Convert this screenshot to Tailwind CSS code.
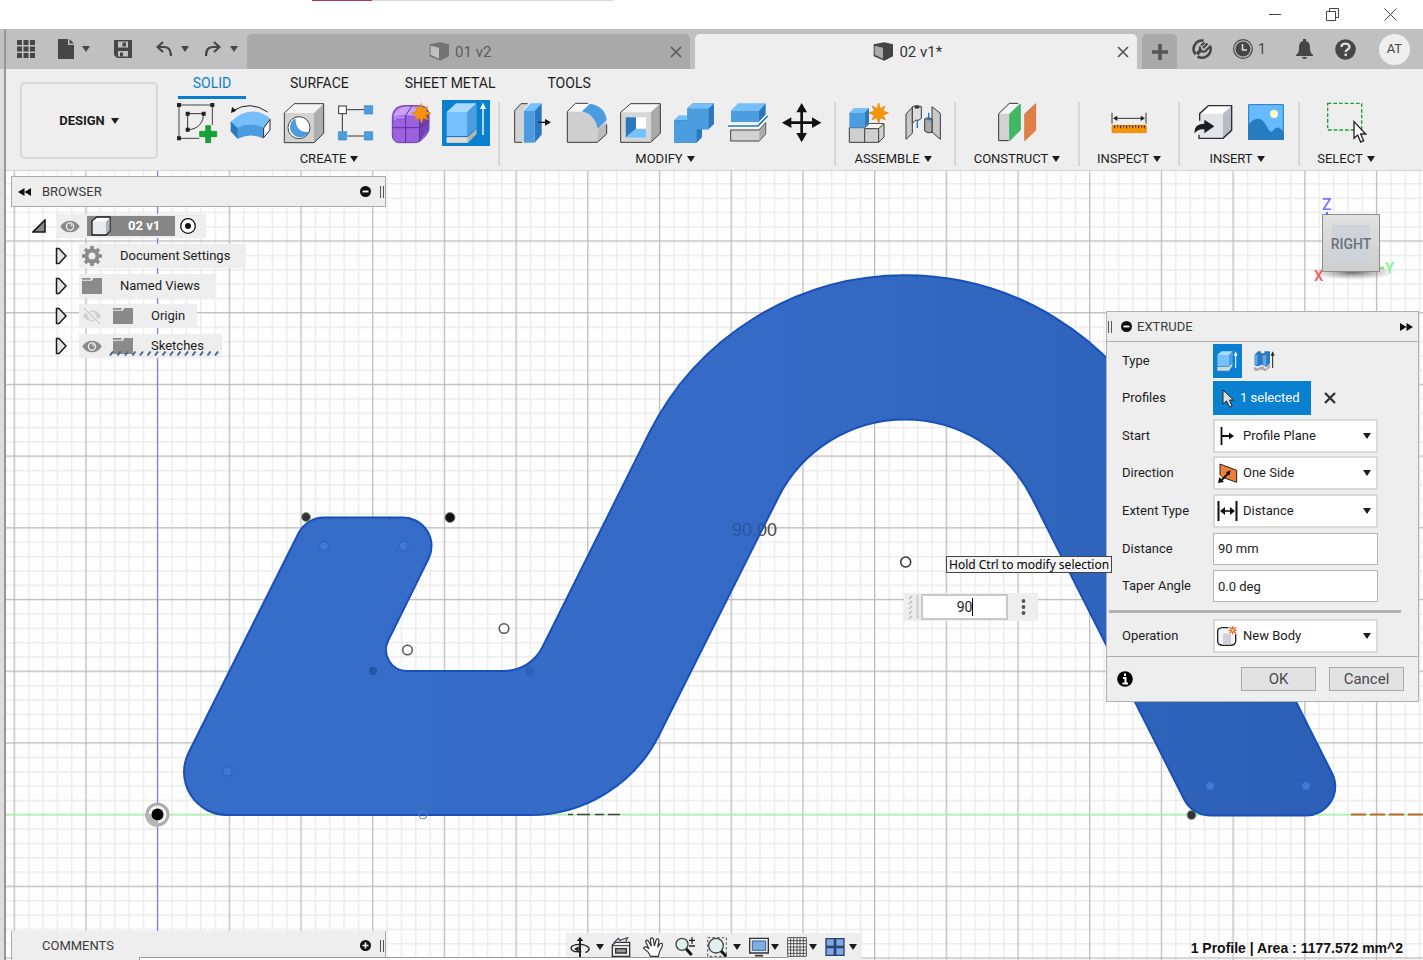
<!DOCTYPE html>
<html lang="en">
<head>
<meta charset="utf-8">
<title>02 v1*</title>
<script src="https://cdn.jsdelivr.net/npm/@tailwindcss/browser@4"></script>
</head>
<body class="flex h-screen flex-col overflow-hidden bg-white font-['Roboto',sans-serif] text-[13px] leading-4 text-[#1c1c1c]">

<!-- shared glyphs -->
<svg class="hidden" aria-hidden="true">
  <symbol id="down" viewBox="0 0 8 6"><path d="M0 0H8L4 6Z" fill="currentColor"/></symbol>
  <symbol id="cross" viewBox="0 0 12 12"><path d="M1 1L11 11M11 1L1 11" stroke="currentColor" stroke-width="1.7" fill="none"/></symbol>
  <symbol id="eye" viewBox="0 0 60 40"><path d="M0 20C14-4 46-4 60 20C46 44 14 44 0 20Z" fill="currentColor"/><circle cx="30" cy="20" r="13" fill="#eee"/><circle cx="30" cy="20" r="9" fill="currentColor"/><circle cx="34" cy="16" r="3" fill="#eee"/></symbol>
  <symbol id="folder" viewBox="0 0 60 48"><path d="M0 0H26V5H0ZM0 8H30L34 0H60V48H0Z" fill="currentColor"/></symbol>
  <symbol id="expand" viewBox="0 0 12 18"><path d="M1.500 1.500H4L11 9L4 16.500H1.500Z" fill="#e4e4e4" stroke="#1a1a1a" stroke-width="1.500"/></symbol>
  <symbol id="star" viewBox="-30 -30 60 60"><path d="M0-30L5-13L19-21L13-6L30 0L13 6L20 20L6 14L0 30L-6 14L-20 20L-13 6L-30 0L-13-6L-19-21L-5-13Z" fill="#f7950a" stroke="#e07f00" stroke-width="2"/></symbol>
  <symbol id="cube" viewBox="0 0 60 56"><path d="M2 6L34 0L60 6V42L34 56L2 42Z" fill="currentColor"/><path d="M5 11L30 17V50L5 38Z" fill="#fff" fill-opacity=".55"/></symbol>
</svg>

<header class="flex h-[29px] shrink-0 items-start">
  <div class="ml-[312px] flex h-px w-[301px] bg-[#d6d6d6]"><div class="w-[60px] bg-[#b03468]"></div></div>
  <div class="ml-auto mr-[26px] flex h-7 items-center gap-[45px] text-[#444]">
    <button aria-label="Minimize"><svg class="block h-[13px] w-3" viewBox="0 0 12 13"><path d="M0 6.500H12" stroke="currentColor"/></svg></button>
    <button aria-label="Restore"><svg class="block h-[13px] w-[13px]" viewBox="0 0 13 13" fill="none" stroke="currentColor"><path d="M.5 3.500H9.500V12.500H.5ZM3.500 3V.5H12.500V9.500H10"/></svg></button>
    <button aria-label="Close window"><svg class="block h-[13px] w-[13px]" viewBox="0 0 13 13"><path d="M.5.5L12.500 12.500M12.500.5L.5 12.500" stroke="currentColor"/></svg></button>
  </div>
</header>

<div class="flex min-h-0 flex-1">
<div class="w-[4px] shrink-0 bg-[#dedede]"><div class="h-10 bg-[#c0c0c0]"></div></div>
<div class="w-[2px] shrink-0 bg-[#969696]"></div>
<div class="flex min-w-0 flex-1 flex-col">

<!-- application bar -->
<nav class="flex h-10 shrink-0 bg-[#c0c0c0] text-[#464646]">
  <div class="flex w-[241px] shrink-0 items-center pl-[11px]">
    <button aria-label="Data panel"><svg class="block h-[18px] w-[18px]" viewBox="0 0 18 18" fill="currentColor"><path d="M0 0H5V5H0ZM6.500 0H11.500V5H6.500ZM13 0H18V5H13ZM0 6.500H5V11.500H0ZM6.500 6.500H11.500V11.500H6.500ZM13 6.500H18V11.500H13ZM0 13H5V18H0ZM6.500 13H11.500V18H6.500ZM13 13H18V18H13Z"/></svg></button>
    <button aria-label="File" class="ml-[23px] flex items-center gap-2"><svg class="h-5 w-4" viewBox="0 0 16 20" fill="currentColor"><path d="M0 0H10V6H16V20H0ZM11.500 0L16 4.500H11.500Z"/></svg><svg class="h-[6px] w-2"><use href="#down"/></svg></button>
    <button aria-label="Save" class="ml-6"><svg class="block h-[18px] w-[18px]" viewBox="0 0 18 18"><path d="M0 0H18V18H3L0 15Z" fill="currentColor"/><path d="M4 1.500H14V7.500H4ZM4 11H14V16.500H4Z" fill="#c0c0c0"/><path d="M8.500 2.500H12V6.500H8.500ZM6 12.500H9V16.500H6Z" fill="currentColor"/></svg></button>
    <button aria-label="Undo" class="ml-6 flex items-center gap-[9px]"><svg class="h-4 w-4" viewBox="0 0 16 16" fill="none" stroke="currentColor" stroke-width="2.200"><path d="M7 1L1.500 6L7 11M2 6H8C13 6 15 9 15 15"/></svg><svg class="h-[6px] w-2"><use href="#down"/></svg></button>
    <button aria-label="Redo" class="ml-4 flex items-center gap-[9px]"><svg class="h-4 w-4" viewBox="0 0 16 16" fill="none" stroke="currentColor" stroke-width="2.200"><path d="M9 1L14.500 6L9 11M14 6H8C3 6 1 9 1 15"/></svg><svg class="h-[6px] w-2"><use href="#down"/></svg></button>
  </div>
  <div class="flex min-w-0 flex-1 gap-[5px] pt-[5px] text-[15px]">
    <div class="flex flex-1 items-center rounded-t-[5px] bg-[#a9a9a9] pr-2 text-[#5b5b5b]">
      <a href="#" class="flex flex-1 items-center justify-center gap-[6px] pl-1"><svg class="h-[19px] w-5 text-[#737373]"><use href="#cube"/></svg>01 v2</a>
      <button aria-label="Close 01 v2"><svg class="block h-3 w-3"><use href="#cross"/></svg></button>
    </div>
    <div class="flex flex-1 items-center rounded-t-[5px] bg-[#eee] pr-2 text-[#333]">
      <a href="#" class="flex flex-1 items-center justify-center gap-[6px] pl-1"><svg class="h-[19px] w-5 text-[#444]"><use href="#cube"/></svg>02 v1*</a>
      <button aria-label="Close 02 v1" class="text-[#555]"><svg class="block h-3 w-3"><use href="#cross"/></svg></button>
    </div>
    <button aria-label="New design" class="flex w-[35px] items-center justify-center rounded-t-[5px] bg-[#a9a9a9] text-[#555]"><svg class="h-4 w-4" viewBox="0 0 16 16"><path d="M8 0V16M0 8H16" stroke="currentColor" stroke-width="3.500"/></svg></button>
  </div>
  <div class="flex w-[246px] shrink-0 items-center pl-[15px] text-[14px]">
    <button aria-label="Extensions"><svg class="block h-5 w-5" viewBox="0 0 20 20" fill="none" stroke="currentColor" stroke-width="2.600"><path d="M11.500 1.700A8.500 8.500 0 0 0 3.500 15.400M5.500 17.300A8.500 8.500 0 0 0 17.800 6.500" /><path d="M5 15L9 11" stroke-width="3.500"/><path d="M8 7.500A4 4 0 0 0 13 12.500L17.500 8M9 6.500L12.500 3.500M11 9L15.500 4.500" stroke-width="2.200"/></svg></button>
    <button class="ml-[21px] flex items-center gap-[5px]" aria-label="Job status, 1"><svg class="h-5 w-5" viewBox="0 0 20 20"><circle cx="10" cy="10" r="9.300" fill="none" stroke="currentColor" stroke-width="1.200"/><circle cx="10" cy="10" r="7.500" fill="currentColor"/><path d="M9.500 5V11H14" fill="none" stroke="#ddd" stroke-width="1.500"/></svg>1</button>
    <button aria-label="Notifications" class="ml-[30px]"><svg class="block h-5 w-[17px]" viewBox="0 0 17 20" fill="currentColor"><path d="M7 0H10V2C13.500 3 14 6 14 9C14 13 15 14 17 16V17H0V16C2 14 3 13 3 9C3 6 3.500 3 7 2ZM6 18H11C11 20.500 6 20.500 6 18Z"/></svg></button>
    <button aria-label="Help" class="ml-[22px]"><svg class="block h-[21px] w-[21px]" viewBox="0 0 21 21"><circle cx="10.500" cy="10.500" r="10.300" fill="currentColor"/><path d="M6.500 8C6.500 3.500 14.500 3.500 14.500 8C14.500 10.500 10.700 10.500 10.700 13M10.700 14.500V17" fill="none" stroke="#ddd" stroke-width="2.400"/></svg></button>
    <button aria-label="Account" class="ml-[23px] flex h-[31px] w-[31px] items-center justify-center rounded-full bg-[#eee] text-[13px]">AT</button>
  </div>
</nav>

<!-- toolbar -->
<section class="flex h-[102px] shrink-0 border-b border-[#d4d4d4] bg-[#eee]">
  <button class="ml-[14px] mt-[13px] flex h-[77px] w-[138px] shrink-0 items-center justify-center gap-[6px] rounded-[5px] border-2 border-[#d8d8d8] font-bold">DESIGN <svg class="h-[6px] w-2"><use href="#down"/></svg></button>
  <div class="ml-[6px] flex flex-col">
    <div class="flex h-[31px] text-[14px]">
      <a href="#" class="ml-[14px] flex h-[30px] w-[68px] justify-center border-b-[3px] border-[#0a7fd0] pt-[6px] text-[#0a80cf]">SOLID</a>
      <a href="#" class="ml-11 pt-[6px]">SURFACE</a>
      <a href="#" class="ml-[56px] pt-[6px]">SHEET METAL</a>
      <a href="#" class="ml-[52px] pt-[6px]">TOOLS</a>
    </div>
    <div class="flex">
      <div class="flex w-[334px] flex-col items-center gap-[5px]">
        <div class="flex gap-[6px]">
          <button aria-label="Create sketch"><svg class="block h-[46px] w-12" viewBox="516 300 144 138"><path d="M637 375V315H537V415H598" fill="none" stroke="#444" stroke-width="3"/><path d="M563 389V341H610C612 365 595 389 563 389" fill="none" stroke="#333" stroke-width="3"/><path d="M531 309h12v12h-12zM631 309h12v12h-12zM531 409h12v12h-12zM557 335h12v12h-12zM605 335h12v12h-12zM557 383h12v12h-12z" fill="#222"/><path d="M617 377H632V394H650V410H632V428H617V410H599V394H617Z" fill="#17a338" stroke="#0d8a2a" stroke-width="2"/></svg></button>
          <button aria-label="Revolve"><svg class="block h-[46px] w-12" viewBox="678 300 144 138"><path d="M692 366Q748 310 810 354L790 385Q750 366 712 386Z" fill="#76bffb"/><path d="M712 384Q750 364 790 383V416Q750 396 712 417Z" fill="#4b9de0"/><path d="M692 364L713 384V417L692 394Z" fill="#2b78bd"/><path d="M791 384L810 358V390L791 413Z" fill="#fff" stroke="#222" stroke-width="3"/><path d="M700 332Q750 300 803 336" fill="none" stroke="#222" stroke-width="3"/><path d="M693 339L696 321L709 332Z" fill="#111"/></svg></button>
          <button aria-label="Hole"><svg class="block h-[46px] w-12" viewBox="840 300 144 138"><path d="M853 339L883 311H971L942 339Z" fill="#f4f4f4"/><path d="M942 339L971 311V400L942 428Z" fill="#aeaeae"/><path d="M853 339H942V428H853Z" fill="#d2d2d2"/><path d="M853 339L883 311H971V400L942 428H853Z" fill="none" stroke="#3a3a3a" stroke-width="3"/><circle cx="897" cy="383" r="33" fill="#fff" stroke="#444" stroke-width="3"/><path d="M885 357A29 29 0 1 0 925 397C900 400 885 382 885 357Z" fill="#4b9de0" stroke="#2b78bd" stroke-width="2"/></svg></button>
          <button aria-label="Rectangular pattern"><svg class="block h-[46px] w-12" viewBox="1002 300 144 138"><path d="M1027 341V395M1042 329H1092M1042 408H1092" stroke="#333" stroke-width="3"/><rect x="1016" y="318" width="23" height="23" fill="#fff" stroke="#333" stroke-width="3"/><path d="M1093 317h25v25h-25zM1015 395h25v25h-25zM1093 395h25v25h-25z" fill="#4b9de0" stroke="#3787cc" stroke-width="2"/></svg></button>
          <button aria-label="Create form"><svg class="block h-[46px] w-12" viewBox="1164 300 144 138"><path d="M1177 350Q1180 318 1212 317H1262Q1288 320 1287 350V388Q1284 405 1258 425Q1250 429 1230 428H1195Q1177 425 1177 405Z" fill="#9a62df" stroke="#6d3aae" stroke-width="3"/><path d="M1180 350Q1185 325 1213 320H1260Q1275 322 1280 334L1256 350Q1220 342 1180 350Z" fill="#c9a0fa"/><path d="M1259 352L1286 332V388L1259 422Z" fill="#7542b5"/><path d="M1217 346V426M1178 383H1259L1286 362M1217 346L1236 318M1259 350V424" stroke="#5c2e99" stroke-width="3" fill="none"/><path d="M1184 360Q1184 352 1192 352H1213" stroke="#c9a0fa" stroke-width="4" fill="none"/><use href="#star" x="1234" y="310" width="60" height="60"/></svg></button>
          <button aria-label="Extrude" class="bg-[#0a80d0]"><svg class="block h-[46px] w-12" viewBox="1326 300 144 138"><path d="M1340 411H1403L1430 386V402L1404 428H1340Z" fill="#b5b5ad"/><path d="M1340 412H1403V428H1340Z" fill="#dcdcd4"/><path d="M1340 336L1368 310H1430L1402 336Z" fill="#a9dafd"/><path d="M1402 336L1430 310V384L1402 408Z" fill="#4b9de0"/><path d="M1340 336H1402V408H1340Z" fill="#76c0fb"/><path d="M1449 405V324" stroke="#fff" stroke-width="4"/><path d="M1449 308L1458 327H1440Z" fill="#fff"/></svg></button>
        </div>
        <button class="flex items-center gap-1 pr-1">CREATE<svg class="h-[6px] w-2"><use href="#down"/></svg></button>
      </div>
      <div class="mt-[2px] h-16 w-[2px] bg-[#d8d8d8]"></div>
      <div class="flex w-[334px] flex-col items-center gap-[5px]">
        <div class="flex gap-[6px]">
          <button aria-label="Press pull"><svg class="block h-[46px] w-12" viewBox="84 300 144 138"><path d="M103 332L123 311H145L128 332V427H104Z" fill="#d2d2d2"/><path d="M126 427H104V332L123 311H143" fill="none" stroke="#3a3a3a" stroke-width="3"/><path d="M131 333L152 310H185L164 333Z" fill="#76bffb"/><path d="M164 333L185 310V404L164 428Z" fill="#2b78bd"/><path d="M131 333H164V428H131Z" fill="#4b9de0"/><path d="M176 367H200" stroke="#111" stroke-width="4"/><path d="M213 367L195 357V377Z" fill="#111"/></svg></button>
          <button aria-label="Fillet"><svg class="block h-[46px] w-12" viewBox="246 300 144 138"><path d="M262 335L286 311H330L306 335Z" fill="#f8f8f8"/><path d="M262 335H305Q345 345 354 386L379 365V402L351 427H262Z" fill="#cfcfcf"/><path d="M354 390L380 366V402L352 427Z" fill="#bbb"/><path d="M306 334L330 311Q375 318 380 360L354 386Q345 345 306 334Z" fill="#4b9de0"/><path d="M324 310H286L262 335V427H352L380 402V374" fill="none" stroke="#3a3a3a" stroke-width="3"/></svg></button>
          <button aria-label="Shell"><svg class="block h-[46px] w-12" viewBox="408 300 144 138"><path d="M422 337L452 311H541L512 337Z" fill="#f6f6f6"/><path d="M512 337L541 311V400L512 427Z" fill="#aaa"/><path d="M422 337H512V427H422Z" fill="#d6d6d6"/><path d="M422 337L452 311H541V400L512 427H422Z" fill="none" stroke="#3a3a3a" stroke-width="3"/><path d="M437 352H498V413H437Z" fill="#fff"/><path d="M437 352H468V386L437 413Z" fill="#2b78bd"/><path d="M437 413L468 386H498V413Z" fill="#76c0fb"/></svg></button>
          <button aria-label="Combine"><svg class="block h-[46px] w-12" viewBox="570 300 144 138"><path d="M583 360L597 347H622V325L639 310H702V372L686 388H666V412L650 428H583Z" fill="#2b78bd"/><path d="M583 362H622V326H686V388H650V428H583Z" fill="#4b9de0"/><path d="M583 361L597 347H622V361ZM622 326L639 310H702L686 326Z" fill="#76bffb"/></svg></button>
          <button aria-label="Split body"><svg class="block h-[46px] w-12" viewBox="732 300 144 138"><path d="M753 332L774 310H857L837 332Z" fill="#76bffb"/><path d="M837 332L857 310V345L837 366Z" fill="#2b78bd"/><path d="M753 332H837V366H753Z" fill="#4b9de0"/><path d="M752 390H837L857 368V402L838 423H752Z" fill="#d2d2d2" stroke="#444" stroke-width="3"/><path d="M838 392V422L856 402V372Z" fill="#aaa"/><path d="M744 378H834L863 348" fill="none" stroke="#fff" stroke-width="13"/><path d="M744 378H834L863 348" fill="none" stroke="#1976c8" stroke-width="5"/></svg></button>
          <button aria-label="Move"><svg class="block h-[46px] w-12" viewBox="894 300 144 138" fill="#111"><path d="M961 335H969V364H998V372H969V401H961V372H932V364H961Z"/><path d="M965 309L981 337H949ZM965 427L981 399H949ZM906 368L934 352V384ZM1024 368L996 352V384Z"/></svg></button>
        </div>
        <button class="flex items-center gap-1 pr-1">MODIFY<svg class="h-[6px] w-2"><use href="#down"/></svg></button>
      </div>
      <div class="mt-[2px] h-16 w-[2px] bg-[#d8d8d8]"></div>
      <div class="flex w-[118px] flex-col items-center gap-[5px]">
        <div class="flex gap-[6px]">
          <button aria-label="New component"><svg class="block h-[46px] w-12" viewBox="1092 300 144 138"><path d="M1108 383H1154L1168 371H1212V411L1196 427H1108Z" fill="#d0d0d0" stroke="#3a3a3a" stroke-width="3"/><path d="M1154 386L1168 372H1210L1196 386Z" fill="#f5f5f5"/><path d="M1154 427V386H1196V427M1196 386L1211 372" fill="none" stroke="#3a3a3a" stroke-width="3"/><path d="M1108 338L1122 324H1167L1153 338Z" fill="#76bffb"/><path d="M1153 338L1167 324V370L1153 383Z" fill="#2b78bd"/><path d="M1108 338H1153V383H1108Z" fill="#4b9de0"/><use href="#star" x="1166" y="309" width="60" height="60"/></svg></button>
          <button aria-label="Joint"><svg class="block h-[46px] w-12" viewBox="1254 300 144 138"><path d="M1278 342L1297 322V400L1278 418Z" fill="#c9c9c9" stroke="#3a3a3a" stroke-width="3"/><path d="M1297 320Q1310 313 1324 320V355Q1318 363 1306 361L1297 370Z" fill="#ddd" stroke="#3a3a3a" stroke-width="3"/><ellipse cx="1311" cy="322" rx="8" ry="4" fill="#333"/><path d="M1312 362V384" stroke="#1976c8" stroke-width="4"/><path d="M1356 320L1381 340V418L1356 396Z" fill="#c9c9c9" stroke="#3a3a3a" stroke-width="3"/><path d="M1334 357Q1344 349 1356 357V397Q1344 402 1334 393Z" fill="#aaa" stroke="#3a3a3a" stroke-width="3"/><path d="M1346 338V360M1340 359H1352" stroke="#1976c8" stroke-width="4"/></svg></button>
        </div>
        <button class="flex items-center gap-1 pr-1">ASSEMBLE<svg class="h-[6px] w-2"><use href="#down"/></svg></button>
      </div>
      <div class="mt-[2px] h-16 w-[2px] bg-[#d8d8d8]"></div>
      <div class="flex w-[122px] flex-col items-center gap-[5px]">
        <button aria-label="Offset plane"><svg class="block h-[46px] w-12" viewBox="153 300 144 138"><path d="M170 341L202 310H234L203 341V422H170Z" fill="#d2d2d2"/><path d="M171 341L202 311H232L203 341Z" fill="#f6f6f6"/><path d="M200 422H170V341L202 310H228" fill="none" stroke="#333" stroke-width="3"/><path d="M203 342L235 312V390L203 422Z" fill="#3dba63" stroke="#2a9c4c" stroke-width="2"/><path d="M248 342L281 311V391L248 422Z" fill="#e08048" stroke="#c96a33" stroke-width="2"/></svg></button>
        <button class="flex items-center gap-1">CONSTRUCT<svg class="h-[6px] w-2"><use href="#down"/></svg></button>
      </div>
      <div class="mt-[2px] h-16 w-[2px] bg-[#d8d8d8]"></div>
      <div class="flex w-[98px] flex-col items-center gap-[5px]">
        <button aria-label="Measure"><svg class="block h-[46px] w-12" viewBox="487 300 144 138"><path d="M508 338V371M610 338V371M520 355H598" stroke="#333" stroke-width="3"/><path d="M511 355L524 347V363ZM607 355L594 347V363Z" fill="#222"/><path d="M508 376H611V398H508Z" fill="#f7950a" stroke="#dd8200" stroke-width="2"/><path d="M516 376V385M525 376V382M534 376V385M543 376V382M552 376V385M561 376V382M570 376V385M579 376V382M588 376V385M597 376V382M605 376V385" stroke="#222" stroke-width="3"/></svg></button>
        <button class="flex items-center gap-1">INSPECT<svg class="h-[6px] w-2"><use href="#down"/></svg></button>
      </div>
      <div class="mt-[2px] h-16 w-[2px] bg-[#d8d8d8]"></div>
      <div class="flex w-[118px] flex-col items-center gap-[5px]">
        <div class="flex gap-[6px]">
          <button aria-label="Insert derive"><svg class="block h-[46px] w-12" viewBox="735 300 144 138"><path d="M770 341L796 317H866V391L840 415H770Z" fill="#e2e4ea"/><path d="M770 341L796 317H866L840 341Z" fill="#fff"/><path d="M840 341L866 317V391L840 415Z" fill="#b9bcc6"/><path d="M770 362V341L796 317H866V391L840 415H768V404" fill="none" stroke="#2c2c34" stroke-width="4"/><path d="M755 400Q752 372 784 371V359L814 379L784 400V388Q766 385 755 400Z" fill="#1b1d24"/></svg></button>
          <button aria-label="Insert image"><svg class="block h-[46px] w-12" viewBox="897 300 144 138"><path d="M916 313H1022V419H916Z" fill="#66bbff"/><path d="M916 374C934 353 953 348 967 372C976 386 980 399 988 394C997 383 1004 374 1022 395V419H916Z" fill="#267cc0"/><path d="M917 314H1021V418H917Z" fill="none" stroke="#2b78bd" stroke-width="3"/><circle cx="993" cy="342" r="12" fill="#ffffc4"/></svg></button>
        </div>
        <button class="flex items-center gap-1 pr-1">INSERT<svg class="h-[6px] w-2"><use href="#down"/></svg></button>
      </div>
      <div class="mt-[2px] h-16 w-[2px] bg-[#d8d8d8]"></div>
      <div class="flex w-[92px] flex-col items-center gap-[5px]">
        <button aria-label="Select"><svg class="block h-[46px] w-12" viewBox="1136 300 144 138"><path d="M1153 310H1255V390H1153Z" fill="none" stroke="#14a03c" stroke-width="4" stroke-dasharray="11 6"/><path d="M1232 365V415L1243 405L1252 426L1261 422L1252 402H1267Z" fill="#fff" stroke="#222" stroke-width="4"/></svg></button>
        <button class="flex items-center gap-1">SELECT<svg class="h-[6px] w-2"><use href="#down"/></svg></button>
      </div>
    </div>
  </div>
</section>

<!-- modelling canvas with floating panels -->
<main class="relative min-h-0 flex-1 overflow-hidden bg-[#fefefe]">
  <svg class="absolute inset-0 h-full w-full" role="img" aria-label="Sketch profile">
    <defs>
      <pattern id="minor" x="157" y="814" width="14.340" height="14.340" patternUnits="userSpaceOnUse"><path d="M.7 0V14.340M0 .7H14.340" stroke="#000" stroke-opacity=".075" stroke-width="1.400"/></pattern>
      <pattern id="major" x="157" y="814" width="71.700" height="71.700" patternUnits="userSpaceOnUse"><path d="M.6 0V71.700M0 .6H71.700" stroke="#000" stroke-opacity=".2" stroke-width="1.200"/></pattern>
      <linearGradient id="solid" gradientUnits="userSpaceOnUse" x1="184" y1="0" x2="1336" y2="0"><stop offset="0" stop-color="#366dc8"/><stop offset=".5" stop-color="#356bc6"/><stop offset="1" stop-color="#2c60b6"/></linearGradient>
      <linearGradient id="dim" gradientUnits="userSpaceOnUse" x1="762" y1="529" x2="763" y2="529.5"><stop offset="0" stop-color="#27549f"/><stop offset="1" stop-color="#4a4a4a"/></linearGradient>
    </defs>
    <g transform="translate(-6 -171)">
      <rect x="6" y="171" width="4000" height="3000" fill="url(#minor)"/>
      <rect x="6" y="171" width="4000" height="3000" fill="url(#major)"/>
      <path d="M6 814.500H4000" stroke="#a6f7a6" stroke-width="1.500"/>
      <path d="M157.500 171V931" stroke="#8080e0" stroke-width="1.200"/>
      <path d="M1351 814.500H4000" stroke="#bb6a2a" stroke-width="2" stroke-dasharray="15 4"/>
      <path d="M568 814.500H573M577 814.500H590M595 814.500H604M608 814.500H620" stroke="#444" stroke-width="1.500"/>
      <circle cx="306" cy="517" r="4.500" fill="#333" stroke="#999"/><circle cx="1191.500" cy="815" r="4.500" fill="#333" stroke="#999"/>
      <path d="M227 815A43 43 0 0 1 188.600 752.700L298.500 533.200A28.500 28.500 0 0 1 324 517.500H403A28.500 28.500 0 0 1 428.500 558.800L388.200 640.600A21 21 0 0 0 407 671H504A43 43 0 0 0 542.400 647.300L648.900 433.400A286.500 286.500 0 0 1 1161 433L1331.900 773A29 29 0 0 1 1306 815.500H1210A29 29 0 0 1 1184 799L1032 498A142 142 0 0 0 778 498L658.700 735.700A144 144 0 0 1 530 815Z" fill="url(#solid)" stroke="#1750b8" stroke-width="2"/>
      <g fill="#4378d6" stroke="#2b5fb9"><circle cx="324" cy="546" r="4.500"/><circle cx="403.500" cy="546" r="4.500"/><circle cx="227.500" cy="771.500" r="4.500"/><circle cx="1210" cy="786" r="4.500"/><circle cx="1306" cy="786" r="4.500"/></g>
      <circle cx="423" cy="815" r="4" fill="none" stroke="#5d82cf"/>
      <circle cx="373" cy="671" r="4" fill="#2354a6"/><circle cx="530" cy="671" r="4.500" fill="#2d60b8"/>
      <circle cx="450" cy="517.500" r="5" fill="#111" stroke="#888"/>
      <g fill="#fff" stroke="#555" stroke-width="1.500"><circle cx="407.500" cy="650" r="4.800"/><circle cx="504" cy="628.500" r="4.800"/><circle cx="905.700" cy="562" r="5" stroke="#333"/></g>
      <circle cx="157.500" cy="814.500" r="10.500" fill="#f5f5f5" stroke="#adadad" stroke-width="3"/><path d="M148 814A10 10 0 0 0 158 824" stroke="#b5b5b5" stroke-width="6" fill="none"/><circle cx="157.500" cy="814.500" r="6" fill="#000"/>
      <text x="732" y="536" font-family="Liberation Sans" font-size="18" fill="url(#dim)">90.00</text>
    </g>
  </svg>

  <!-- browser panel -->
  <aside class="absolute left-[5px] top-[5px]">
    <div class="flex h-[31px] w-[375px] items-center border border-[#ababab] bg-[#eee] text-[#3c3c3c]">
      <button aria-label="Collapse browser" class="ml-[6px]"><svg class="block h-2 w-[13px]" viewBox="0 0 13 8" fill="#111"><path d="M6.500 0V8L0 4ZM13 0V8L6.500 4Z"/></svg></button>
      <h2 class="ml-[11px] flex-1">BROWSER</h2>
      <button aria-label="Browser options"><svg class="block h-[11px] w-[11px]" viewBox="0 0 11 11"><circle cx="5.500" cy="5.500" r="5.500" fill="#111"/><path d="M2.500 5.500H8.500" stroke="#fff" stroke-width="1.800"/></svg></button>
      <div class="ml-[9px] mr-px h-3 w-1 border-x border-[#555]"></div>
    </div>
    <ul class="mt-[7px] flex flex-col gap-[6px] leading-6">
      <li class="flex h-6 items-center">
        <button aria-label="Collapse" class="ml-[21px]"><svg class="block h-[14px] w-[14px]" viewBox="0 0 14 14"><path d="M13 1V13H1Z" fill="#888" stroke="#1a1a1a" stroke-width="1.600"/></svg></button>
        <div class="ml-[10px] flex h-6 items-center bg-[#eee] px-1">
          <svg class="h-[13px] w-5 text-[#8a8a8a]"><use href="#eye"/></svg>
          <div class="ml-[7px] flex h-5 w-[88px] items-center bg-[#868686] pl-1 font-bold text-white"><svg class="h-5 w-5" viewBox="0 0 20 20"><path d="M1 5L6 1H19V15L15 19H1Z" fill="#e8eaf0" stroke="#222" stroke-width="1.300"/><path d="M15 6V18L18.500 15V2Z" fill="#aeb1ba"/><path d="M2 5L6 2H18L15 5.500H2Z" fill="#fff"/></svg><span class="ml-[17px]">02 v1</span></div>
          <button aria-label="Activate component" class="ml-[5px] mr-[6px]"><svg class="block h-4 w-4" viewBox="0 0 16 16"><circle cx="8" cy="8" r="7.300" fill="#fff" stroke="#111" stroke-width="1.300"/><circle cx="8" cy="8" r="3" fill="#111"/></svg></button>
        </div>
      </li>
      <li class="flex h-6 items-center">
        <button aria-label="Expand Document Settings" class="ml-[44px]"><svg class="block h-[18px] w-3"><use href="#expand"/></svg></button>
        <div class="ml-3 flex h-6 w-[167px] items-center bg-[#eee] pl-[3px]"><svg class="h-5 w-5" viewBox="-10 -10 20 20"><circle r="5.500" fill="none" stroke="#8a8a8a" stroke-width="4"/><path d="M0-10V-6M0 6V10M-10 0H-6M6 0H10M-7-7L-4-4M4 4L7 7M-7 7L-4 4M4-4L7-7" stroke="#8a8a8a" stroke-width="3.600"/></svg><span class="ml-[18px]">Document Settings</span></div>
      </li>
      <li class="flex h-6 items-center">
        <button aria-label="Expand Named Views" class="ml-[44px]"><svg class="block h-[18px] w-3"><use href="#expand"/></svg></button>
        <div class="ml-3 flex h-6 w-[137px] items-center bg-[#eee] pl-[3px]"><svg class="h-4 w-5 text-[#8a8a8a]"><use href="#folder"/></svg><span class="ml-[18px]">Named Views</span></div>
      </li>
      <li class="flex h-6 items-center">
        <button aria-label="Expand Origin" class="ml-[44px]"><svg class="block h-[18px] w-3"><use href="#expand"/></svg></button>
        <div class="ml-3 flex h-6 w-[118px] items-center bg-[#eee] pl-[3px]"><svg class="h-4 w-5 text-[#d0d0d0]" viewBox="0 0 20 16"><use href="#eye" y="2" width="20" height="12"/><path d="M2 0L18 16" stroke="#eee" stroke-width="4"/><path d="M2 0L18 16" stroke="currentColor" stroke-width="1.600"/></svg><svg class="ml-[11px] h-4 w-5 text-[#8a8a8a]"><use href="#folder"/></svg><span class="ml-[18px]">Origin</span></div>
      </li>
      <li class="flex h-6 items-center">
        <button aria-label="Expand Sketches" class="ml-[44px]"><svg class="block h-[18px] w-3"><use href="#expand"/></svg></button>
        <div class="relative ml-3 flex h-6 w-[143px] items-center bg-[#eee] pl-[3px]"><svg class="h-[13px] w-5 text-[#8a8a8a]"><use href="#eye"/></svg><svg class="ml-[11px] h-4 w-5 text-[#8a8a8a]"><use href="#folder"/></svg><span class="ml-[18px]">Sketches</span>
          <svg class="absolute bottom-[2px] left-[30px] h-[5px] w-[111px]" viewBox="0 0 111 5"><path d="M1 4.500L4 .5M8.500 4.500L11.500.5M16 4.500L19 .5M23.500 4.500L26.500.5M31 4.500L34 .5M38.500 4.500L41.500.5M46 4.500L49 .5M53.500 4.500L56.500.5M61 4.500L64 .5M68.500 4.500L71.500.5M76 4.500L79 .5M83.500 4.500L86.500.5M91 4.500L94 .5M98.500 4.500L101.500.5M106 4.500L109 .5" stroke="#4c668f" stroke-width="2"/></svg></div>
      </li>
    </ul>
  </aside>

  <!-- view cube -->
  <svg class="absolute right-[24px] top-[22px] h-[94px] w-[88px]" viewBox="0 0 88 94" role="img" aria-label="View cube">
    <defs><linearGradient id="face" x1="0" y1="0" x2="0" y2="1"><stop offset="0" stop-color="#e2e2e2"/><stop offset="1" stop-color="#cdcdcd"/></linearGradient><radialGradient id="shade"><stop offset="0" stop-color="#555" stop-opacity=".9"/><stop offset="1" stop-color="#888" stop-opacity="0"/></radialGradient></defs>
    <ellipse cx="42" cy="79" rx="42" ry="8" fill="url(#shade)"/>
    <path d="M11.500 21.500H68.500V78.500H11.500Z" fill="url(#face)" stroke="#8c8c8c"/><path d="M21 32H59V68H21Z" fill="#cfd3da"/>
    <text x="40" y="56" text-anchor="middle" font-family="Roboto" font-size="14" font-weight="500" fill="#69727d">RIGHT</text>
    <text x="11" y="17" font-family="Roboto" font-size="16" font-weight="500" fill="#7a7af2">Z</text><path d="M16 19V22" stroke="#6a6af0" stroke-width="2"/>
    <text x="3" y="88" font-family="Roboto" font-size="15" font-weight="500" fill="#ee6060">X</text>
    <text x="74" y="80" font-family="Roboto" font-size="15" font-weight="500" fill="#7cf58a">Y</text><path d="M69 75H73" stroke="#6cf07c" stroke-width="2"/>
  </svg>

  <!-- inline value box -->
  <div class="absolute left-[898px] top-[422px] flex h-7 w-[134px] items-center bg-[#eee]">
    <svg class="ml-1 h-6 w-[13px]" viewBox="0 0 13 24"><path d="M1 4L4 1M1 9L4 6M1 14L4 11M1 19L4 16M1 24L4 21" stroke="#bdbdbd" stroke-width="1.500"/><path d="M9.500 0V24" stroke="#ccc" stroke-width="2"/></svg>
    <label for="inline-distance" class="sr-only">Distance value</label>
    <div class="relative w-[87px]"><input id="inline-distance" value="90" class="block h-[26px] w-full border-2 border-[#c9c9c9] bg-white text-center text-[14px] leading-5 outline-none"><i class="absolute left-[51px] top-[4px] h-[18px] w-px bg-black"></i></div>
    <button aria-label="More options" class="ml-[13px]"><svg class="block h-4 w-[5px]" viewBox="0 0 5 16" fill="#555"><circle cx="2.500" cy="2" r="1.900"/><circle cx="2.500" cy="8" r="1.900"/><circle cx="2.500" cy="14" r="1.900"/></svg></button>
  </div>

  <!-- extrude dialog -->
  <form class="absolute right-[4px] top-[140px] flex w-[313px] flex-col border border-[#b0b0b0] bg-[#eee]">
    <div class="flex h-[30px] items-center border-b border-[#b0b0b0] text-[#3c3c3c]">
      <div class="ml-px h-3 w-1 border-x border-[#555]"></div>
      <button type="button" aria-label="Collapse sections" class="ml-[9px]"><svg class="block h-[11px] w-[11px]" viewBox="0 0 11 11"><circle cx="5.500" cy="5.500" r="5.500" fill="#111"/><path d="M2.500 5.500H8.500" stroke="#fff" stroke-width="1.800"/></svg></button>
      <h2 class="ml-[5px] flex-1">EXTRUDE</h2>
      <button type="button" aria-label="Collapse dialog" class="mr-[5px]"><svg class="block h-2 w-[13px]" viewBox="0 0 13 8" fill="#111"><path d="M0 0V8L6.500 4ZM6.500 0V8L13 4Z"/></svg></button>
    </div>
    <div class="grid h-[263px] grid-cols-[91px_165px] grid-rows-7 items-center pl-[15px]">
      <span>Type</span>
      <div class="flex items-center gap-2">
        <button type="button" aria-label="Extrude" class="flex h-[34px] w-[29px] items-center justify-center bg-[#0a80d0]"><svg class="h-5 w-[21px]" viewBox="351 513 63 60"><path d="M352 560H387L397 550V558L387 572H352Z" fill="#d6d6ce"/><path d="M352 525L364 514H398L388 525Z" fill="#a9dafd"/><path d="M388 525L398 514V548L388 558Z" fill="#4b9de0"/><path d="M352 525H388V558H352Z" fill="#76c0fb"/><path d="M407 564V524" stroke="#fff" stroke-width="3"/><path d="M407 514L413 527H401Z" fill="#fff"/></svg></button>
        <button type="button" aria-label="Thin extrude" class="flex h-[34px] w-[29px] items-center justify-center"><svg class="h-5 w-[21px]" viewBox="459 513 63 60"><path d="M460 562Q470 570 478 562Q486 556 494 570L506 554V562L492 573Q484 566 478 568Q470 573 460 570Z" fill="#aaa" stroke="#777"/><path d="M461 524L471 514H480V520H490V514H507V550L495 562Q486 550 478 556Q470 562 461 556Z" fill="#2b78bd"/><path d="M461 524H470V556H461ZM484 528L496 524V558H486Z" fill="#5aa8e8"/><path d="M515 564V524" stroke="#222" stroke-width="3"/><path d="M515 514L521 527H509Z" fill="#222"/></svg></button>
      </div>
      <span>Profiles</span>
      <div class="flex items-center">
        <button type="button" class="flex h-[34px] w-[98px] items-center gap-[6px] bg-[#0a80d0] pl-[9px] text-white"><svg class="h-[19px] w-3" viewBox="0 0 12 19"><path d="M1 1V15L4.500 12L7.500 18L10 17L7.500 11H11.500Z" fill="#ddd" stroke="#222"/></svg>1 selected</button>
        <button type="button" aria-label="Clear selection" class="ml-[13px]"><svg class="block h-3 w-3" viewBox="0 0 12 12"><path d="M1 1L11 11M11 1L1 11" stroke="#333" stroke-width="2.300"/></svg></button>
      </div>
      <label for="start">Start</label>
      <div class="relative"><select id="start" class="block h-[34px] w-full appearance-none border-2 border-[#dadada] bg-white pl-7"><option>Profile Plane</option></select>
        <svg class="pointer-events-none absolute left-[7px] top-2 h-[18px] w-[15px]" viewBox="0 0 15 18"><path d="M1.500 0V18M2 9H10" stroke="#111" stroke-width="1.800"/><path d="M14 9L9 5.500V12.500Z" fill="#111"/></svg><svg class="pointer-events-none absolute right-[7px] top-[14px] h-[6px] w-2"><use href="#down"/></svg></div>
      <label for="direction">Direction</label>
      <div class="relative"><select id="direction" class="block h-[34px] w-full appearance-none border-2 border-[#dadada] bg-white pl-7"><option>One Side</option></select>
        <svg class="pointer-events-none absolute left-[5px] top-[7px] h-5 w-5" viewBox="0 0 60 60"><path d="M6 3L56 22V58L6 40Z" fill="#f07f3a" stroke="#222" stroke-width="3"/><path d="M0 60V32L32 60Z" fill="#fff"/><path d="M8 54L34 28" stroke="#111" stroke-width="6"/><path d="M0 60L4 42L18 57ZM38 22L24 28L34 38Z" fill="#111"/></svg><svg class="pointer-events-none absolute right-[7px] top-[14px] h-[6px] w-2"><use href="#down"/></svg></div>
      <label for="extent">Extent Type</label>
      <div class="relative"><select id="extent" class="block h-[34px] w-full appearance-none border-2 border-[#dadada] bg-white pl-7"><option>Distance</option></select>
        <svg class="pointer-events-none absolute left-1 top-[7px] h-5 w-[21px]" viewBox="0 0 21 20"><path d="M1.500 0V20M19.500 0V20" stroke="#111" stroke-width="2"/><path d="M6 10H15" stroke="#111" stroke-width="1.600"/><path d="M3 10L8 6V14ZM18 10L13 6V14Z" fill="#111"/></svg><svg class="pointer-events-none absolute right-[7px] top-[14px] h-[6px] w-2"><use href="#down"/></svg></div>
      <label for="distance">Distance</label>
      <input id="distance" value="90 mm" class="block h-8 w-full border border-[#b5b5b5] bg-white px-1 outline-none">
      <label for="taper">Taper Angle</label>
      <input id="taper" value="0.0 deg" class="block h-8 w-full border border-[#b5b5b5] bg-white px-1 outline-none">
    </div>
    <div class="ml-[2px] mr-[17px] mt-[5px] h-[3px] bg-[#b2b2b2]"></div>
    <div class="grid h-[43px] grid-cols-[91px_165px] items-center pl-[15px] pt-[3px]">
      <label for="operation">Operation</label>
      <div class="relative"><select id="operation" class="block h-[34px] w-full appearance-none border-2 border-[#dadada] bg-white pl-7"><option>New Body</option></select>
        <svg class="pointer-events-none absolute left-1 top-[7px] h-5 w-5" viewBox="0 0 60 60"><path d="M2 16Q2 6 16 5H40Q56 6 56 16V46Q56 58 40 58H18Q2 58 2 46Z" fill="#f4f4f6" stroke="#222" stroke-width="4"/><path d="M18 22H42V54H18Z" fill="#cfd2da"/><circle cx="47" cy="13" r="15" fill="#fff"/><path d="M47 1V25M35 13H59M38 4L56 22M56 4L38 22" stroke="#e8591a" stroke-width="4"/><circle cx="47" cy="13" r="4" fill="#ffd27a"/></svg><svg class="pointer-events-none absolute right-[7px] top-[14px] h-[6px] w-2"><use href="#down"/></svg></div>
    </div>
    <div class="flex h-[45px] items-center gap-[13px] border-t border-[#b0b0b0] pl-[10px] pr-[14px] text-[15px] text-[#4a4a4a]">
      <button type="button" aria-label="Information" class="mr-auto"><svg class="block h-4 w-4" viewBox="0 0 16 16"><circle cx="8" cy="8" r="7.800" fill="#000"/><path d="M8 2.500V5M6 7H8.500V12.500M5.500 12.500H11" stroke="#fff" stroke-width="2" fill="none"/></svg></button>
      <button type="submit" class="h-6 w-[75px] border border-[#a9a9a9] bg-[#e2e2e2]">OK</button>
      <button type="button" class="h-6 w-[75px] border border-[#a9a9a9] bg-[#e2e2e2]">Cancel</button>
    </div>
  </form>

  <div role="tooltip" class="absolute left-[940px] top-[385px] flex h-[17px] items-center whitespace-nowrap border border-[#444] bg-[#f4f4f4] px-[2px] font-['Noto_Sans',sans-serif] text-[12px] text-black">Hold Ctrl to modify selection</div>

  <!-- bottom bars -->
  <div class="absolute bottom-0 left-[5px] flex h-[29px] w-[375px] items-center border-x border-[#ababab] bg-[#eee] text-[#3c3c3c]">
    <h2 class="ml-[30px] flex-1">COMMENTS</h2>
    <button aria-label="Add comment"><svg class="block h-[11px] w-[11px]" viewBox="0 0 11 11"><circle cx="5.500" cy="5.500" r="5.500" fill="#111"/><path d="M2.500 5.500H8.500M5.500 2.500V8.500" stroke="#fff" stroke-width="1.600"/></svg></button>
    <div class="ml-[9px] mr-px h-3 w-1 border-x border-[#555]"></div>
  </div>
  <div class="absolute bottom-0 left-[560px] flex h-[27px] w-[296px] items-center bg-[#eee] pl-1">
    <button aria-label="Orbit" class="flex items-center gap-[6px]"><svg class="h-5 w-5" viewBox="0 0 60 60" fill="none" stroke="#222" stroke-width="4"><path d="M58 35Q50 22 30 22Q4 22 3 34Q5 46 34 44M58 35Q56 44 46 46"/><path d="M30 8V60" stroke-width="6"/><path d="M30 0L20 12H40ZM12 36L26 28V44Z" fill="#222" stroke="none"/></svg><svg class="h-[6px] w-2"><use href="#down"/></svg></button>
    <button aria-label="Look at" class="ml-[7px]"><svg class="block h-5 w-5" viewBox="0 0 60 60" fill="#eee" stroke="#333" stroke-width="4"><path d="M4 58V24L14 16H56V58Z"/><path d="M4 26H56" stroke-width="3"/><path d="M14 35H46V48H14Z" fill="#999"/><path d="M8 18L22 4L26 10L50 2L44 14" fill="none" stroke="#556"/></svg></button>
    <button aria-label="Pan" class="ml-3"><svg class="block h-5 w-5" viewBox="0 0 60 60"><path d="M22 58L16 46L2 34Q4 26 14 32L18 36L8 14Q10 6 16 12L25 28L22 6Q26-1 31 6L34 27L40 7Q46 3 48 10L44 31L51 20Q58 16 59 24L49 46L46 58Z" fill="#fff" stroke="#333" stroke-width="3.500"/></svg></button>
    <button aria-label="Zoom" class="ml-3"><svg class="block h-5 w-5" viewBox="0 0 60 60" fill="none"><circle cx="21" cy="22" r="18" fill="#dff0ef" stroke="#444" stroke-width="4"/><path d="M34 36L50 54" stroke="#111" stroke-width="9"/><path d="M42 10H60M51 1V20M42 27H60" stroke="#222" stroke-width="4"/></svg></button>
    <button aria-label="Fit" class="ml-3 flex items-center gap-[6px]"><svg class="h-5 w-5" viewBox="0 0 60 60" fill="none"><path d="M2 2H58V58H2Z" stroke="#555" stroke-width="3" stroke-dasharray="8 6"/><circle cx="27" cy="26" r="22" fill="#dff0ef" stroke="#444" stroke-width="4"/><path d="M42 42L58 58" stroke="#111" stroke-width="9"/></svg><svg class="h-[6px] w-2"><use href="#down"/></svg></button>
    <button aria-label="Display settings" class="ml-2 flex items-center gap-[2px]"><svg class="h-5 w-5" viewBox="0 0 60 60"><path d="M2 4H58V48H2Z" fill="#eee" stroke="#333" stroke-width="4"/><path d="M10 12H50V40H10Z" fill="#82aee6" stroke="#3a63a0" stroke-width="3"/><path d="M18 56H42" stroke="#333" stroke-width="5"/></svg><svg class="h-[6px] w-2"><use href="#down"/></svg></button>
    <button aria-label="Grid and snaps" class="ml-2 flex items-center gap-[2px]"><svg class="h-5 w-5" viewBox="0 0 60 60"><path d="M2 2H58V58H2ZM11 2V58M20 2V58M30 2V58M39 2V58M49 2V58M2 11H58M2 20H58M2 30H58M2 39H58M2 49H58" fill="#fff" stroke="#333" stroke-width="2.500"/></svg><svg class="h-[6px] w-2"><use href="#down"/></svg></button>
    <button aria-label="Viewports" class="ml-2 flex items-center gap-1"><svg class="h-5 w-5" viewBox="0 0 60 60"><path d="M3 5H28V28H3ZM32 5H57V28H32ZM3 32H28V55H3ZM32 32H57V55H32Z" fill="#7fa8e0" stroke="#26436f" stroke-width="4"/></svg><svg class="h-[6px] w-2"><use href="#down"/></svg></button>
  </div>
  <div class="absolute bottom-0 left-[133px] h-[3px] w-[649px] border-l border-t border-[#9a9a9a] bg-white"></div>
  <p class="absolute bottom-1 right-5 font-['Liberation_Sans',sans-serif] text-[14px] font-bold text-[#111]">1 Profile | Area : 1177.572 mm^2</p>
</main>
</div>
</div>
</body>
</html>
